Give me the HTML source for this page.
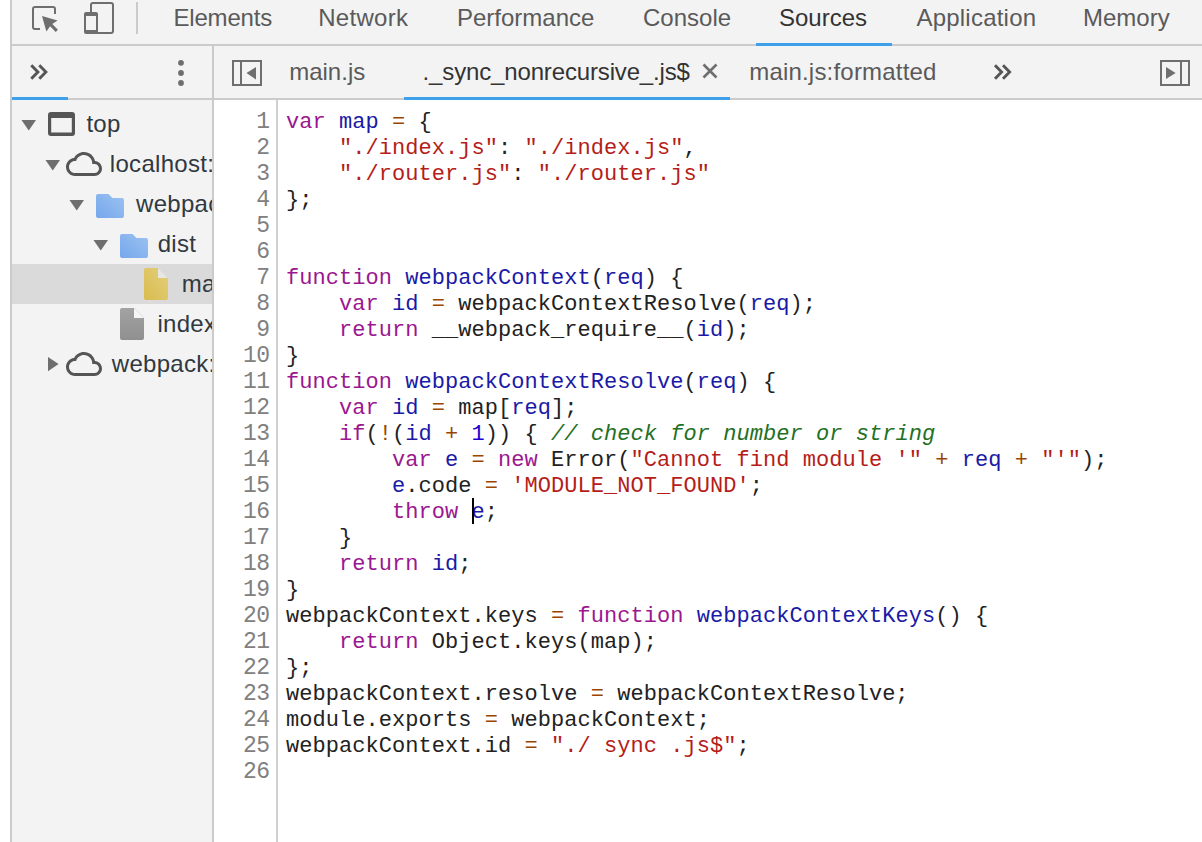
<!DOCTYPE html>
<html><head><meta charset="utf-8"><title>DevTools</title>
<style>
html,body{margin:0;padding:0;}
body{width:1202px;height:842px;overflow:hidden;background:#fff;position:relative;font-family:"Liberation Sans", sans-serif;}
div,span.a{position:absolute;}
.tab{font-size:24px;line-height:30px;height:30px;color:#5a5a5a;white-space:pre;}
.tree{font-size:24px;letter-spacing:0.3px;line-height:30px;height:30px;color:#303942;white-space:pre;}
.ln{left:214px;width:55.6px;text-align:right;font-family:"Liberation Mono", monospace;font-size:23px;line-height:26px;color:#808080;letter-spacing:-0.556px;}
.cl{left:286px;font-family:"Liberation Mono", monospace;font-size:22px;line-height:26px;color:#222;white-space:pre;letter-spacing:0.045px;}
.k{color:#9b1790}.d{color:#1a1aa6}.s{color:#b51d1a}.o{color:#994500}.n{color:#1c00cf}.c{color:#237025;font-style:italic}
svg{position:absolute;overflow:visible;}
</style></head><body>
<div style="left:10px;top:0px;width:2px;height:842px;background:#cbcbcb;"></div><div style="left:12px;top:0px;width:1190px;height:44px;background:#f3f3f3;"></div><div style="left:12px;top:44px;width:1190px;height:2px;background:#cbcbcb;"></div><div style="left:12px;top:46px;width:200px;height:796px;background:#f3f3f3;"></div><div style="left:212px;top:46px;width:2px;height:796px;background:#cbcbcb;"></div><div style="left:214px;top:46px;width:988px;height:52px;background:#f3f3f3;"></div><div style="left:12px;top:98px;width:1190px;height:2px;background:#cbcbcb;"></div><div style="left:214px;top:100px;width:988px;height:742px;background:#fff;"></div><div style="left:276px;top:100px;width:2px;height:742px;background:#d0d0d0;"></div><div style="left:12px;top:264px;width:200px;height:40px;background:#dadada;"></div><div class="tab" style="left:173.4px;top:3px;color:#5a5a5a;letter-spacing:-0.17px">Elements</div><div class="tab" style="left:318.2px;top:3px;color:#5a5a5a;letter-spacing:0.3px">Network</div><div class="tab" style="left:457px;top:3px;color:#5a5a5a;letter-spacing:0px">Performance</div><div class="tab" style="left:643px;top:3px;color:#5a5a5a;letter-spacing:0px">Console</div><div class="tab" style="left:779px;top:3px;color:#333;letter-spacing:0px">Sources</div><div class="tab" style="left:916.4px;top:3px;color:#5a5a5a;letter-spacing:0.23px">Application</div><div class="tab" style="left:1083px;top:3px;color:#5a5a5a;letter-spacing:0px">Memory</div><div style="left:756px;top:43px;width:136px;height:3px;background:#3e9fea;"></div><div class="tab" style="left:289.2px;top:57px;color:#5a5a5a;letter-spacing:0px">main.js</div><div class="tab" style="left:422.6px;top:57px;color:#333;letter-spacing:-0.15px">._sync_nonrecursive_.js$</div><div class="tab" style="left:749.2px;top:57px;color:#5a5a5a;letter-spacing:0.2px">main.js:formatted</div><div style="left:404px;top:97px;width:326px;height:3px;background:#3e9fea;"></div><div style="left:12px;top:97px;width:56px;height:3px;background:#3e9fea;"></div><div style="left:12px;top:100px;width:200px;height:742px;overflow:hidden"><div style="left:-12px;top:-100px;width:1202px;height:842px"><div class="tree" style="left:86.4px;top:109px">top</div><div class="tree" style="left:109.8px;top:149px">localhost:</div><div class="tree" style="left:136.0px;top:189px">webpack</div><div class="tree" style="left:157.7px;top:229px">dist</div><div class="tree" style="left:181.8px;top:269px">main.js</div><div class="tree" style="left:157.4px;top:309px">index.html</div><div class="tree" style="left:111.8px;top:349px">webpack://</div></div></div><div class="ln" style="top:109px">1</div><div class="cl" style="top:110px"><span class="k">var</span> <span class="d">map</span> <span class="o">=</span> {</div><div class="ln" style="top:135px">2</div><div class="cl" style="top:136px">    <span class="s">"./index.js"</span>: <span class="s">"./index.js"</span>,</div><div class="ln" style="top:161px">3</div><div class="cl" style="top:162px">    <span class="s">"./router.js"</span>: <span class="s">"./router.js"</span></div><div class="ln" style="top:187px">4</div><div class="cl" style="top:188px">};</div><div class="ln" style="top:213px">5</div><div class="cl" style="top:214px"></div><div class="ln" style="top:239px">6</div><div class="cl" style="top:240px"></div><div class="ln" style="top:265px">7</div><div class="cl" style="top:266px"><span class="k">function</span> <span class="d">webpackContext</span>(<span class="d">req</span>) {</div><div class="ln" style="top:291px">8</div><div class="cl" style="top:292px">    <span class="k">var</span> <span class="d">id</span> <span class="o">=</span> webpackContextResolve(<span class="d">req</span>);</div><div class="ln" style="top:317px">9</div><div class="cl" style="top:318px">    <span class="k">return</span> __webpack_require__(<span class="d">id</span>);</div><div class="ln" style="top:343px">10</div><div class="cl" style="top:344px">}</div><div class="ln" style="top:369px">11</div><div class="cl" style="top:370px"><span class="k">function</span> <span class="d">webpackContextResolve</span>(<span class="d">req</span>) {</div><div class="ln" style="top:395px">12</div><div class="cl" style="top:396px">    <span class="k">var</span> <span class="d">id</span> <span class="o">=</span> map[<span class="d">req</span>];</div><div class="ln" style="top:421px">13</div><div class="cl" style="top:422px">    <span class="k">if</span>(<span class="o">!</span>(<span class="d">id</span> <span class="o">+</span> <span class="n">1</span>)) { <span class="c">// check for number or string</span></div><div class="ln" style="top:447px">14</div><div class="cl" style="top:448px">        <span class="k">var</span> <span class="d">e</span> <span class="o">=</span> <span class="k">new</span> Error(<span class="s">"Cannot find module '"</span> <span class="o">+</span> <span class="d">req</span> <span class="o">+</span> <span class="s">"'"</span>);</div><div class="ln" style="top:473px">15</div><div class="cl" style="top:474px">        <span class="d">e</span>.code <span class="o">=</span> <span class="s">'MODULE_NOT_FOUND'</span>;</div><div class="ln" style="top:499px">16</div><div class="cl" style="top:500px">        <span class="k">throw</span> <span class="d">e</span>;</div><div class="ln" style="top:525px">17</div><div class="cl" style="top:526px">    }</div><div class="ln" style="top:551px">18</div><div class="cl" style="top:552px">    <span class="k">return</span> <span class="d">id</span>;</div><div class="ln" style="top:577px">19</div><div class="cl" style="top:578px">}</div><div class="ln" style="top:603px">20</div><div class="cl" style="top:604px">webpackContext.keys <span class="o">=</span> <span class="k">function</span> <span class="d">webpackContextKeys</span>() {</div><div class="ln" style="top:629px">21</div><div class="cl" style="top:630px">    <span class="k">return</span> Object.keys(map);</div><div class="ln" style="top:655px">22</div><div class="cl" style="top:656px">};</div><div class="ln" style="top:681px">23</div><div class="cl" style="top:682px">webpackContext.resolve <span class="o">=</span> webpackContextResolve;</div><div class="ln" style="top:707px">24</div><div class="cl" style="top:708px">module.exports <span class="o">=</span> webpackContext;</div><div class="ln" style="top:733px">25</div><div class="cl" style="top:734px">webpackContext.id <span class="o">=</span> <span class="s">"./ sync .js$"</span>;</div><div class="ln" style="top:759px">26</div><div class="cl" style="top:760px"></div><div style="left:472px;top:498px;width:2px;height:26px;background:#000;"></div>
<svg width="1202" height="842" style="left:0;top:0" viewBox="0 0 1202 842">
<defs>
<linearGradient id="gf" x1="0" y1="1" x2="1" y2="0"><stop offset="0" stop-color="#75a7ec"/><stop offset="1" stop-color="#9cc2f1"/></linearGradient>
<linearGradient id="gy" x1="0" y1="1" x2="1" y2="0"><stop offset="0" stop-color="#d9bb4f"/><stop offset="1" stop-color="#e3d07c"/></linearGradient>
<linearGradient id="gg" x1="0" y1="1" x2="0" y2="0"><stop offset="0" stop-color="#8f8f8f"/><stop offset="1" stop-color="#a3a3a3"/></linearGradient>
<clipPath id="sideclip"><rect x="12" y="100" width="200" height="742"/></clipPath>
</defs>
<!-- inspect -->
<path d="M40 29H35a2 2 0 0 1-2-2V9a2 2 0 0 1 2-2H53a2 2 0 0 1 2 2V14" fill="none" stroke="#6e6e6e" stroke-width="2"/>
<path d="M42 16L57.6 20.6L52.3 24.1L57.9 29.7L55.7 31.9L50.1 26.3L46.4 31.6Z" fill="#6e6e6e"/>
<!-- device -->
<rect x="91" y="3" width="22" height="30" rx="2" fill="none" stroke="#6e6e6e" stroke-width="2"/>
<path d="M86 12H96a2 2 0 0 1 2 2V34H86a2 2 0 0 1-2-2V14a2 2 0 0 1 2-2Z" fill="#6e6e6e"/>
<rect x="86" y="16" width="10" height="14" fill="#f3f3f3"/>
<rect x="136" y="2" width="2" height="32" fill="#cbcbcb"/>
<!-- sidebar chevrons -->
<path d="M31.3 65.2L37.9 72L31.3 78.8M39.3 65.2L45.9 72L39.3 78.8" fill="none" stroke="#555" stroke-width="2.9"/>
<circle cx="181" cy="62.8" r="2.9" fill="#6e6e6e"/><circle cx="181" cy="73" r="2.9" fill="#6e6e6e"/><circle cx="181" cy="83" r="2.9" fill="#6e6e6e"/>
<!-- left toggle -->
<rect x="233" y="61" width="28" height="24" fill="none" stroke="#6e6e6e" stroke-width="2"/>
<rect x="240" y="61" width="2" height="24" fill="#6e6e6e"/>
<path d="M246.5 73L256 67V79.5Z" fill="#6e6e6e"/>
<!-- close x -->
<path d="M703.5 64.5L716.5 77.5M716.5 64.5L703.5 77.5" stroke="#6e6e6e" stroke-width="2.6"/>
<!-- editor chevrons -->
<path d="M995 65.2L1001.6 72L995 78.8M1003 65.2L1009.6 72L1003 78.8" fill="none" stroke="#555" stroke-width="2.9"/>
<!-- right toggle -->
<rect x="1161" y="61" width="28" height="24" fill="none" stroke="#6e6e6e" stroke-width="2"/>
<rect x="1180" y="61" width="2" height="24" fill="#6e6e6e"/>
<path d="M1166 67V79L1175.6 73Z" fill="#6e6e6e"/>
<g clip-path="url(#sideclip)">
<!-- tree triangles -->
<path d="M21.5 120H36L28.75 130.6Z" fill="#6e6e6e"/>
<path d="M45.5 160H60L52.75 170.6Z" fill="#6e6e6e"/>
<path d="M69.5 200H84L76.75 210.6Z" fill="#6e6e6e"/>
<path d="M93.5 240H108L100.75 250.6Z" fill="#6e6e6e"/>
<path d="M48 357V371.3L58.6 364Z" fill="#6e6e6e"/>
<!-- frame icon -->
<path fill-rule="evenodd" d="M51 112H72a3 3 0 0 1 3 3V133a3 3 0 0 1-3 3H51a3 3 0 0 1-3-3V115a3 3 0 0 1 3-3ZM51.2 118V132.6H71.8V118Z" fill="#555"/>
<!-- clouds -->
<path transform="translate(66 146) scale(1.5)" d="M19.35 10.04C18.67 6.59 15.64 4 12 4 9.11 4 6.6 5.64 5.35 8.04 2.34 8.36 0 10.91 0 14c0 3.31 2.69 6 6 6h13c2.76 0 5-2.24 5-5 0-2.64-2.05-4.78-4.65-4.96zM19 18H6c-2.21 0-4-1.79-4-4s1.79-4 4-4h.71C7.37 7.69 9.48 6 12 6c3.04 0 5.5 2.46 5.5 5.5v.5H19c1.66 0 3 1.34 3 3s-1.34 3-3 3z" fill="#555"/>
<path transform="translate(66 346) scale(1.5)" d="M19.35 10.04C18.67 6.59 15.64 4 12 4 9.11 4 6.6 5.64 5.35 8.04 2.34 8.36 0 10.91 0 14c0 3.31 2.69 6 6 6h13c2.76 0 5-2.24 5-5 0-2.64-2.05-4.78-4.65-4.96zM19 18H6c-2.21 0-4-1.79-4-4s1.79-4 4-4h.71C7.37 7.69 9.48 6 12 6c3.04 0 5.5 2.46 5.5 5.5v.5H19c1.66 0 3 1.34 3 3s-1.34 3-3 3z" fill="#555"/>
<!-- folders -->
<path d="M98 194H108.5L112.5 198H122a2 2 0 0 1 2 2V216a2 2 0 0 1-2 2H98a2 2 0 0 1-2-2V196a2 2 0 0 1 2-2Z" fill="url(#gf)"/>
<path d="M122 234H132.5L136.5 238H146a2 2 0 0 1 2 2V256a2 2 0 0 1-2 2H122a2 2 0 0 1-2-2V236a2 2 0 0 1 2-2Z" fill="url(#gf)"/>
<!-- files -->
<path d="M146 268H158L168 278V298a2 2 0 0 1-2 2H146a2 2 0 0 1-2-2V270a2 2 0 0 1 2-2Z" fill="url(#gy)"/>
<path d="M158 268L168 278H158Z" fill="#e6e6e6"/>
<path d="M122 308H134L144 318V338a2 2 0 0 1-2 2H122a2 2 0 0 1-2-2V310a2 2 0 0 1 2-2Z" fill="url(#gg)"/>
<path d="M134 308L144 318H134Z" fill="#f6f6f6"/>
</g>
</svg>
</body></html>
